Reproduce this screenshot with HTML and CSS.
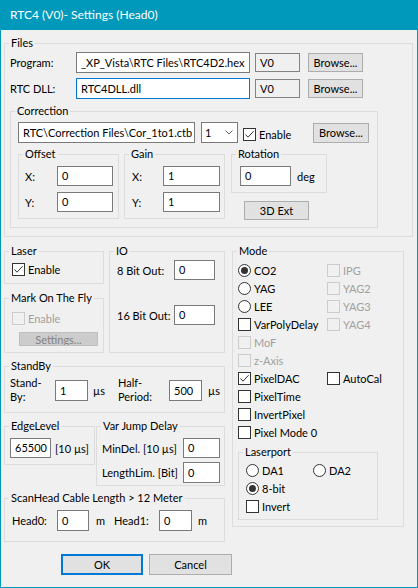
FILE: index.html
```html
<!DOCTYPE html>
<html>
<head>
<meta charset="utf-8">
<link rel="stylesheet" href="styles.css">
</head>
<body>
<div class="window">
  <div class="titlebar">RTC4 (V0)- Settings (Head0)</div>
  <div class="client">
    <div class="g files">
      <div class="lg">Files</div>
      <div class="files-body">
        <div class="frow">
          <span class="lbl w66">Program:</span>
          <div class="tb path1">_XP_Vista\RTC Files\RTC4D2.hex</div>
          <div class="ro">V0</div>
          <button class="btn browse">Browse...</button>
        </div>
        <div class="frow r2">
          <span class="lbl w66">RTC DLL:</span>
          <div class="tb path1 focus">RTC4DLL.dll</div>
          <div class="ro">V0</div>
          <button class="btn browse">Browse...</button>
        </div>
        <div class="g corr">
          <div class="lg">Correction</div>
          <div class="corr-body">
            <div class="corr-top">
              <div class="tb cpath">RTC\Correction Files\Cor_1to1.ctb</div>
              <div class="combo"><span>1</span><svg width="8" height="5" viewBox="0 0 8 5"><path d="M0.5 0.5 L4 4 L7.5 0.5" fill="none" stroke="#606060" stroke-width="1"/></svg></div>
              <label class="chk corr-chk"><span class="cb"><svg width="11" height="11" viewBox="0 0 11 11"><path d="M1.5 5.5 L4 8.2 L9.6 2.2" fill="none" stroke="#333" stroke-width="1"/></svg></span>Enable</label>
              <button class="btn cbrowse">Browse...</button>
            </div>
            <div class="corr-groups">
              <div class="g offset">
                <div class="lg">Offset</div>
                <div class="og-body">
                  <div class="row"><span class="lbl w32">X:</span><div class="tb h20 w56">0</div></div>
                  <div class="row mt6"><span class="lbl w32">Y:</span><div class="tb h20 w56">0</div></div>
                </div>
              </div>
              <div class="g gain">
                <div class="lg">Gain</div>
                <div class="gg-body">
                  <div class="row"><span class="lbl w31">X:</span><div class="tb h20 w57">1</div></div>
                  <div class="row mt6"><span class="lbl w31">Y:</span><div class="tb h20 w57">1</div></div>
                </div>
              </div>
              <div class="rotcol">
                <div class="g rotation">
                  <div class="lg">Rotation</div>
                  <div class="rot-body">
                    <div class="row"><div class="tb h20 w51">0</div><span class="deg">deg</span></div>
                  </div>
                </div>
                <button class="btn ext">3D Ext</button>
              </div>
            </div>
          </div>
        </div>
      </div>
    </div>

    <div class="lower">
      <div class="leftcol">
        <div class="row1">
          <div class="lasercol">
            <div class="g laser">
              <div class="lg">Laser</div>
              <div class="laser-body">
                <label class="chk"><span class="cb"><svg width="11" height="11" viewBox="0 0 11 11"><path d="M1.5 5.5 L4 8.2 L9.6 2.2" fill="none" stroke="#333" stroke-width="1"/></svg></span>Enable</label>
              </div>
            </div>
            <div class="g motf">
              <div class="lg">Mark On The Fly</div>
              <div class="motf-body">
                <label class="chk dis"><span class="cb"></span>Enable</label>
                <button class="btn settings" disabled>Settings...</button>
              </div>
            </div>
          </div>
          <div class="g io">
            <div class="lg">IO</div>
            <div class="io-body">
              <div class="row"><span class="lbl w57">8 Bit Out:</span><div class="tb h20 w41">0</div></div>
              <div class="row mt25"><span class="lbl w57">16 Bit Out:</span><div class="tb h20 w41">0</div></div>
            </div>
          </div>
        </div>

        <div class="g standby">
          <div class="lg">StandBy</div>
          <div class="sb-body">
            <div class="row sbrow">
              <span class="lbl2 w45">Stand-<br>By:</span>
              <div class="tb w33">1</div>
              <span class="unit u1">µs</span>
              <span class="lbl2 w51">Half-<br>Period:</span>
              <div class="tb w33">500</div>
              <span class="unit u2">µs</span>
            </div>
          </div>
        </div>

        <div class="row3">
          <div class="g edge">
            <div class="lg">EdgeLevel</div>
            <div class="edge-body">
              <div class="row"><div class="tb h20 w41">65500</div><span class="unit u3">[10 µs]</span></div>
            </div>
          </div>
          <div class="g vjd">
            <div class="lg">Var Jump Delay</div>
            <div class="vjd-body">
              <div class="row"><span class="lbl w81">MinDel. [10 µs]</span><div class="tb h20 w37">0</div></div>
              <div class="row mt4"><span class="lbl w81">LengthLim. [Bit]</span><div class="tb w37">0</div></div>
            </div>
          </div>
        </div>

        <div class="g scan">
          <div class="lg">ScanHead Cable Length &gt; 12 Meter</div>
          <div class="scan-body">
            <div class="row">
              <span class="lbl w45">Head0:</span>
              <div class="tb w32">0</div>
              <span class="unit u4">m</span>
              <span class="lbl w45 head1">Head1:</span>
              <div class="tb w33">0</div>
              <span class="unit u5">m</span>
            </div>
          </div>
        </div>
      </div>

      <div class="g mode">
        <div class="lg">Mode</div>
        <div class="mode-body">
          <div class="mgrid">
            <label class="chk c1"><span class="rb on"></span>CO2</label>
            <label class="chk c2 dis"><span class="cb"></span>IPG</label>
            <label class="chk c1"><span class="rb"></span>YAG</label>
            <label class="chk c2 dis"><span class="cb"></span>YAG2</label>
            <label class="chk c1"><span class="rb"></span>LEE</label>
            <label class="chk c2 dis"><span class="cb"></span>YAG3</label>
            <label class="chk c1"><span class="cb"></span>VarPolyDelay</label>
            <label class="chk c2 dis"><span class="cb"></span>YAG4</label>
            <label class="chk c1 dis"><span class="cb"></span>MoF</label>
            <label class="chk c1 dis"><span class="cb"></span>z-Axis</label>
            <label class="chk c1"><span class="cb"><svg width="11" height="11" viewBox="0 0 11 11"><path d="M1.5 5.5 L4 8.2 L9.6 2.2" fill="none" stroke="#333" stroke-width="1"/></svg></span>PixelDAC</label>
            <label class="chk c2"><span class="cb"></span>AutoCal</label>
            <label class="chk c1"><span class="cb"></span>PixelTime</label>
            <label class="chk c1"><span class="cb"></span>InvertPixel</label>
            <label class="chk c1"><span class="cb"></span>Pixel Mode 0</label>
          </div>
          <div class="g lport">
            <div class="lg">Laserport</div>
            <div class="lp-body">
              <label class="chk c1"><span class="rb"></span>DA1</label>
              <label class="chk c2"><span class="rb"></span>DA2</label>
              <label class="chk c1"><span class="rb on"></span>8-bit</label>
              <label class="chk c1"><span class="cb"></span>Invert</label>
            </div>
          </div>
        </div>
      </div>
    </div>

    <div class="buttons">
      <button class="btn ok">OK</button>
      <button class="btn cancel">Cancel</button>
    </div>
  </div>
</div>
</body>
</html>
```

FILE: styles.css
```css
* { box-sizing: border-box; }
html, body { margin: 0; padding: 0; }
body {
  font-family: Lato, "Noto Sans", sans-serif;
  font-size: 11px;
  color: #000;
  background: #fff;
}
.window {
  width: 418px;
  height: 588px;
  display: flex;
  flex-direction: column;
  background: #f0f0f0;
}
.titlebar {
  flex: none;
  height: 30px;
  background: #0099bc;
  color: #fff;
  font-size: 12px;
  line-height: 30px;
  padding-left: 10px;
}
.client {
  flex: 1;
  border: 1px solid #0099bc;
  border-top: 0;
  padding: 13px 0 0 3px;
}

/* group boxes: top border = caption's middle */
.g {
  border: 1px solid #dcdcdc;
}
.g > .lg {
  width: max-content;
  height: 15px;
  margin: -8px 0 0 4px;
  padding: 0 2px 2px;
  line-height: 13px;
  background: #f0f0f0;
  white-space: nowrap;
}

.row { display: flex; align-items: center; }
.frow { display: flex; align-items: center; height: 21px; }
.lbl { flex: none; white-space: nowrap; }
.lbl2 { flex: none; line-height: 14px; }
.w66 { width: 66px; }
.w32 { width: 32px; }
.w31 { width: 31px; }
.w57 { width: 57px; }
.w45 { width: 45px; }
.w51 { width: 51px; }
.w81 { width: 81px; }

.tb {
  flex: none;
  height: 21px;
  border: 1px solid #7a7a7a;
  background: #fff;
  padding: 0 4px;
  line-height: 19px;
  white-space: nowrap;
  overflow: hidden;
}
.tb.h20 { height: 20px; line-height: 18px; }
.tb.focus { border-color: #0078d7; }
.tb.w56 { width: 56px; }
.tb.w57 { width: 57px; }
.tb.w51 { width: 51px; }
.tb.w41 { width: 41px; }
.tb.w37 { width: 37px; }
.tb.w33 { width: 33px; }
.tb.w32 { width: 32px; }

.ro {
  flex: none;
  width: 45px;
  height: 19px;
  border: 1px solid #838383;
  background: #f0f0f0;
  padding: 0 4px;
  line-height: 17px;
  margin-right: 8px;
}
.btn {
  flex: none;
  font: inherit;
  color: #000;
  height: 19px;
  border: 1px solid #adadad;
  background: #e1e1e1;
  padding: 0;
  margin: 0;
  text-align: center;
  line-height: 17px;
}

/* Files */
.files { width: 409px; }
.files-body { padding: 1px 8px 8px 5px; }
.path1 { width: 174px; margin-right: 5px; }
.browse { width: 55px; }
.r2 { margin-top: 5px; }

.corr { width: 368px; margin-top: 12px; }
.corr-body { padding: 3px 8px 7px 7px; }
.corr-top { display: flex; align-items: flex-start; }
.cpath { width: 177px; margin-right: 6px; }
.combo {
  flex: none;
  width: 37px;
  height: 21px;
  border: 1px solid #7a7a7a;
  background: #fff;
  display: flex;
  align-items: center;
  justify-content: space-between;
  padding: 0 4px 0 3px;
}
.corr-chk { margin: 6px 0 0 5px; height: 13px; }
.cbrowse { width: 56px; height: 20px; line-height: 18px; margin: 1px 0 0 auto; }

.corr-groups { display: flex; align-items: flex-start; margin-top: 11px; }
.offset { width: 101px; margin-right: 5px; }
.og-body { padding: 4px 5px 6px 6px; }
.gain { width: 101px; margin-right: 6px; }
.gg-body { padding: 4px 0 6px 7px; }
.mt6 { margin-top: 6px; }
.rotcol { width: 96px; }
.rotation { width: 96px; }
.rot-body { padding: 4px 0 6px 8px; }
.deg { margin-left: 6px; }
.ext { display: block; width: 65px; margin: 8px 0 0 13px; }

/* check boxes / radios */
.chk {
  display: flex;
  align-items: center;
  white-space: nowrap;
}
.cb, .rb {
  flex: none;
  width: 13px;
  height: 13px;
  border: 1px solid #333;
  background: #fff;
  margin-right: 3px;
  display: flex;
  align-items: center;
  justify-content: center;
}
.rb { border-radius: 50%; }
.rb.on::after {
  content: "";
  width: 7px;
  height: 7px;
  border-radius: 50%;
  background: #333;
}
.chk.dis { color: #a0a0a0; }
.chk.dis .cb { border-color: #cccccc; background: #f0f0f0; }

/* lower area */
.lower { display: flex; align-items: flex-start; margin-top: 14px; }
.leftcol { width: 221px; flex: none; }
.row1 { display: flex; }
.lasercol { width: 100px; flex: none; }
.laser-body { padding: 2px 0 5px 7px; }
.laser-body .chk { height: 17px; }
.motf { margin-top: 14px; }
.motf-body { padding: 4px 0 6px 7px; }
.motf-body .chk { height: 17px; }
.settings {
  display: block;
  width: 79px;
  height: 14px;
  line-height: 14px;
  margin: 5px 0 0 7px;
  background: #cccccc;
  border-color: #bfbfbf;
  color: #838383;
  overflow: hidden;
}
.io { width: 116px; flex: none; margin-left: 5px; }
.io-body { padding: 1px 0 0 7px; }
.mt25 { margin-top: 25px; }

.standby { margin-top: 13px; }
.sb-body { padding: 2px 0 8px 5px; }
.sbrow { height: 28px; }
.unit { flex: none; white-space: nowrap; }
.u1 { width: 25px; margin-left: 5px; }
.u2 { margin-left: 6px; }

.row3 { display: flex; align-items: flex-start; margin-top: 13px; }
.edge { width: 91px; flex: none; }
.edge-body { padding: 4px 0 6px 5px; }
.u3 { margin-left: 4px; }
.vjd { width: 129px; flex: none; margin-left: 1px; }
.vjd-body { padding: 4px 0 2px 5px; }
.mt4 { margin-top: 4px; }

.scan { margin-top: 12px; }
.scan-body { padding: 4px 0 10px 7px; }
.u4 { width: 18px; margin-left: 7px; }
.u5 { margin-left: 6px; }

.mode { width: 172px; flex: none; margin-left: 7px; }
.mode-body { padding: 2px 0 6px 5px; }
.mgrid {
  display: grid;
  grid-template-columns: 89px 1fr;
  grid-auto-rows: 18px;
}
.c1 { grid-column: 1; }
.c2 { grid-column: 2; }
.lport { width: 140px; margin-top: 11px; }
.lp-body {
  display: grid;
  grid-template-columns: 67px 1fr;
  grid-auto-rows: 18px;
  padding: 1px 0 4px 7px;
}

.buttons { display: flex; margin-top: 12px; padding-left: 57px; }
.ok {
  width: 82px;
  height: 21px;
  border: 2px solid #0078d7;
  line-height: 17px;
}
.cancel {
  width: 83px;
  height: 21px;
  margin-left: 6px;
  line-height: 19px;
}
```
